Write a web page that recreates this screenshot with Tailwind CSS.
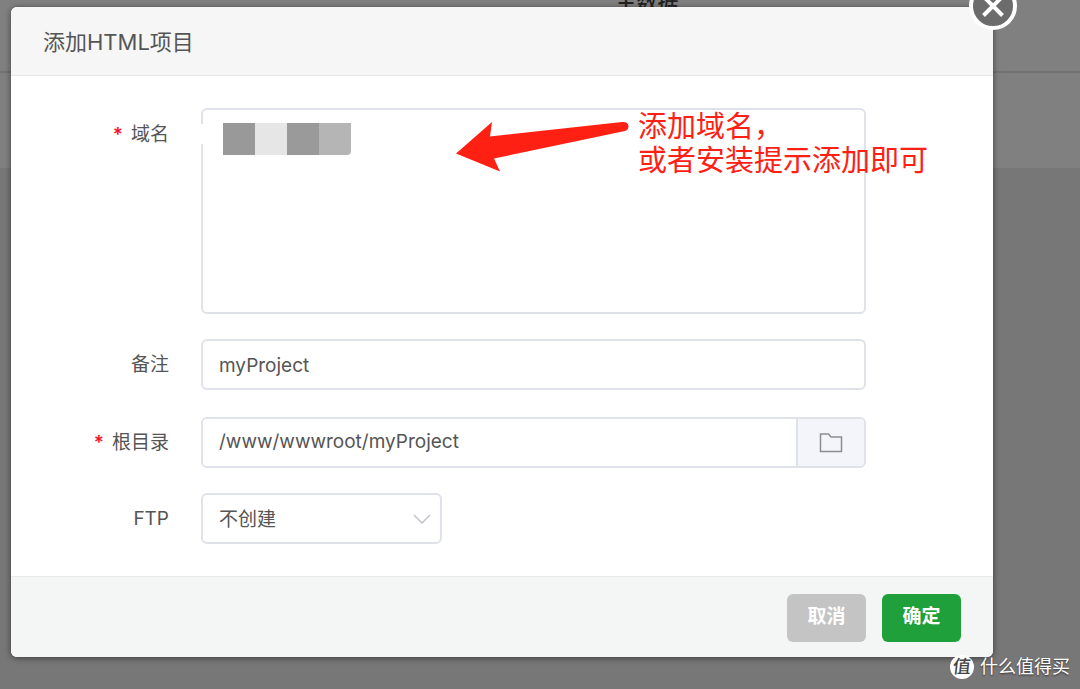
<!DOCTYPE html>
<html lang="zh-CN">
<head>
<meta charset="utf-8">
<meta name="viewport" content="width=device-width, initial-scale=1">
<title>添加HTML项目</title>
<script src="https://cdn.jsdelivr.net/npm/@tailwindcss/browser@4"></script>
</head>
<body class="relative min-h-screen overflow-hidden bg-[#777777] font-['Inter','Noto_Sans_CJK_SC',sans-serif] text-[#555555]">
  <!-- Dimmed page behind the dialog -->
  <div class="absolute inset-x-0 top-0 h-42 bg-[#808080]">
    <div class="flex h-[73px] items-start justify-center border-b-2 border-[#727272] pl-[214px]">
      <p class="-mt-2.5 text-[21px] leading-6 font-medium text-[#222222]">主数据</p>
    </div>
  </div>

  <div class="relative pt-[7px] pr-[87px] pl-[11px]">
    <section role="dialog" aria-labelledby="title" class="relative rounded-md bg-white shadow-[0_1px_6px_rgba(0,0,0,0.5)]">
      <header class="flex h-[69px] items-center rounded-t-md border-b border-[#e8e8e8] bg-[#f6f6f6] px-8">
        <h1 id="title" class="pt-0.5 text-[22px] leading-8">添加HTML项目</h1>
      </header>
      <button type="button" aria-label="关闭" class="absolute -top-[25px] -right-6 size-12 rounded-full border-4 border-white bg-[#6c6c6c] text-white">
        <svg viewBox="0 0 40 40" class="size-10" fill="none" stroke="currentColor" stroke-width="4"><path d="M10.500 10.500 29.500 29.500M29.500 10.500 10.500 29.500"/></svg>
      </button>

      <form id="project" class="flex flex-col pt-8 pr-[127px] pb-8 text-[19px]">
        <div class="relative mb-[25px] flex items-start">
          <label for="domain" class="mr-8 w-[158px] shrink-0 pt-0.5 text-right leading-[50px]"><span class="mr-2 font-semibold text-[#f5142a]">*</span>域名</label>
          <textarea id="domain" class="h-[206px] min-w-0 flex-1 resize-none rounded-md border-2 border-[#dfe2e9] bg-white px-4 py-3 outline-none"></textarea>
          <!-- Hidden value -->
          <div class="absolute top-[15px] left-[212px] flex h-8" aria-hidden="true">
            <span class="w-8 bg-[#999999]"></span><span class="w-8 bg-[#e6e6e6]"></span><span class="w-8 bg-[#9a9a9a]"></span><span class="w-8 rounded-br-sm bg-[#b5b5b5]"></span>
          </div>
          <span class="absolute top-4 left-[189px] h-5 w-1 rounded-sm bg-white" aria-hidden="true"></span>
          <svg class="absolute top-[10px] left-[440px] h-16 w-45 text-[#ff2014]" viewBox="0 0 180 64" fill="currentColor" aria-hidden="true"><path d="M5 35.500 41 4 39 18.500 171 4Q177 3.500 177.500 8 177.500 12 174 13L43 40.500 49 53.500Z"/></svg>
          <p class="absolute top-0.5 left-[627px] text-[29px] leading-[34px] whitespace-nowrap text-[#ff2014]">添加域名，<br>或者安装提示添加即可</p>
        </div>

        <div class="mb-[27px] flex items-center">
          <label for="note" class="mr-8 w-[158px] shrink-0 pt-0.5 text-right">备注</label>
          <input id="note" value="myProject" class="h-[51px] min-w-0 flex-1 rounded-md border-2 border-[#dfe2e9] bg-white px-4 pt-0.5 outline-none">
        </div>

        <div class="mb-[25px] flex items-center">
          <label for="root" class="mr-8 w-[158px] shrink-0 pt-0.5 text-right"><span class="mr-2 font-semibold text-[#f5142a]">*</span>根目录</label>
          <div class="flex h-[51px] min-w-0 flex-1 overflow-hidden rounded-md border-2 border-[#dfe2e9]">
            <input id="root" value="/www/wwwroot/myProject" class="min-w-0 flex-1 bg-white px-4 outline-none">
            <button type="button" aria-label="选择目录" class="flex w-[68px] items-center justify-center border-l-2 border-[#dfe2e9] bg-[#f4f5fa] text-[#8b8d92]">
              <svg viewBox="0 0 24 20" class="h-5 w-6" fill="none" stroke="currentColor" stroke-width="1.500"><path d="M1.500 1H9.500L12 4H22.500V18.500H1.500Z"/></svg>
            </button>
          </div>
        </div>

        <div class="flex items-center">
          <label for="ftp" class="mr-8 w-[158px] shrink-0 pt-0.5 text-right">FTP</label>
          <div class="relative w-[241px]">
            <select id="ftp" class="h-[51px] w-full appearance-none rounded-md border-2 border-[#dfe2e9] bg-white px-4 pt-1 outline-none"><option>不创建</option></select>
            <svg viewBox="0 0 18 10" class="pointer-events-none absolute top-[21px] right-[11px] h-[10px] w-[18px] text-[#c0c4cc]" fill="none" stroke="currentColor" stroke-width="1.500"><path d="M1 1 9 9 17 1"/></svg>
          </div>
        </div>
      </form>

      <footer class="flex h-[81px] items-center justify-end gap-4 rounded-b-md border-t border-[#e8ecea] bg-[#f4f6f6] px-8 pt-px text-[19px] font-bold text-white">
        <button type="button" class="h-12 w-[79px] rounded-md bg-[#c4c4c4]">取消</button>
        <button type="submit" form="project" class="h-12 w-[79px] rounded-md bg-[#20a03a]">确定</button>
      </footer>
    </section>
  </div>

  <div class="absolute right-[10px] bottom-[10px] flex items-center gap-1.5 text-white [text-shadow:0_1px_2px_rgba(0,0,0,0.6)]">
    <span class="flex size-6 items-center justify-center rounded-full bg-white text-[18px] leading-6 font-medium text-[#444444] [text-shadow:none]"><span class="-skew-x-6">值</span></span>
    <span class="text-[18px] leading-6">什么值得买</span>
  </div>
</body>
</html>
